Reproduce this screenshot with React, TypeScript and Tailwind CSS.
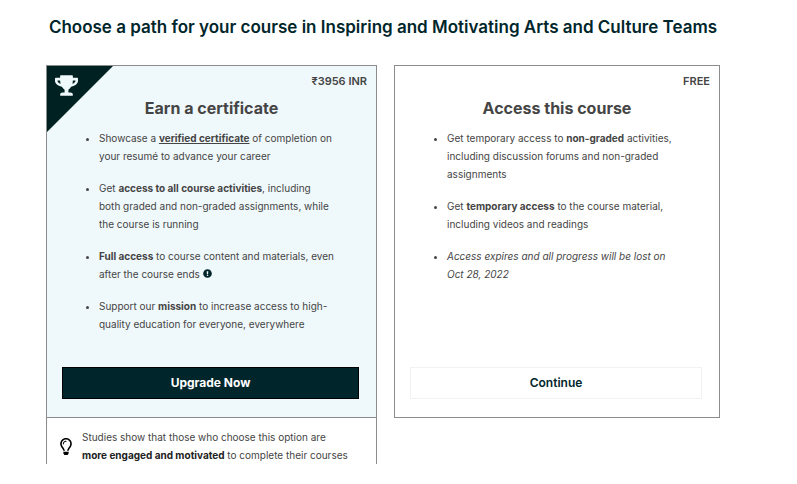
import React from 'react';
import { FaExclamationCircle, FaRegLightbulb, FaTrophy } from 'react-icons/fa';

type CardProps = {
  title: string;
  price: string;
  className: string;
  badge?: React.ReactNode;
  children: React.ReactNode;
  action: React.ReactNode;
};

function PathCard({ title, price, className, badge, children, action }: CardProps) {
  return (
    <section className={`relative flex flex-col border border-[#8c8c8c] pt-[6px] pb-[18px] ${className}`}>
      {badge}
      <div className="pr-[9px] text-right text-[11px] leading-[18px] font-semibold">{price}</div>
      <h2 className="mt-[6px] text-center text-[16px] leading-6 font-bold">{title}</h2>
      <ul className="mt-[9px] mb-[34px] flex list-disc flex-col gap-[14px] pr-[42px] pl-[52px]">
        {children}
      </ul>
      <div className="mt-auto flex pr-[17px] pl-[15px]">{action}</div>
    </section>
  );
}

export default function App() {
  return (
    <main className="bg-white pr-[77px] pl-[46px] font-['Inter',sans-serif] text-[10px] leading-[18px] text-[#454545]">
      <h1 className="-mx-2 pt-[15px] text-center text-[17px] leading-6 font-semibold text-[#00262b]">
        Choose a path for your course in Inspiring and Motivating Arts and Culture Teams
      </h1>

      <div className="mt-[26px] grid grid-cols-[331fr_326fr] gap-x-[17px]">
        <PathCard
          title="Earn a certificate"
          price="₹3956 INR"
          className="bg-[#eff8fb]"
          badge={
            <div className="absolute top-0 left-0 h-[66px] w-[66px] bg-[#002121] [clip-path:polygon(0_0,100%_0,0_100%)]">
              <FaTrophy className="mt-2 ml-2 h-[23px] w-[23px] text-[#eff8fb]" />
            </div>
          }
          action={
            <button type="button" className="h-8 w-full border border-black bg-[#00262b] text-[12px] font-bold text-white">
              Upgrade Now
            </button>
          }
        >
          <li>
            Showcase a{' '}
            <a href="#verified" className="font-bold underline">verified certificate</a>{' '}
            of completion on your resumé to advance your career
          </li>
          <li>
            Get <b>access to all course activities</b>, including both graded and non-graded assignments, while the
            course is running
          </li>
          <li>
            <b>Full access</b> to course content and materials, even after the course ends{' '}
            <FaExclamationCircle className="inline h-[9px] w-[9px] align-baseline text-[#00262b]" />
          </li>
          <li>
            Support our <b>mission</b> to increase access to high-quality education for everyone, everywhere
          </li>
        </PathCard>

        <PathCard
          title="Access this course"
          price="FREE"
          className="bg-white"
          action={
            <button type="button" className="h-8 w-full border border-[#f2f2f2] bg-white text-[12px] font-semibold text-[#00262b]">
              Continue
            </button>
          }
        >
          <li>
            Get temporary access to <b>non-graded</b> activities, including discussion forums and non-graded
            assignments
          </li>
          <li>
            Get <b>temporary access</b> to the course material, including videos and readings
          </li>
          <li>
            <i>Access expires and all progress will be lost on Oct 28, 2022</i>
          </li>
        </PathCard>

        <div className="flex items-center gap-2 border-x border-[#8c8c8c] pt-[10px] pr-6 pl-[11px]">
          <FaRegLightbulb className="h-[17px] w-4 shrink-0 text-black" />
          <p>
            Studies show that those who choose this option are{' '}
            <b className="text-[#222222]">more engaged and motivated</b> to complete their courses
          </p>
        </div>
      </div>
    </main>
  );
}
